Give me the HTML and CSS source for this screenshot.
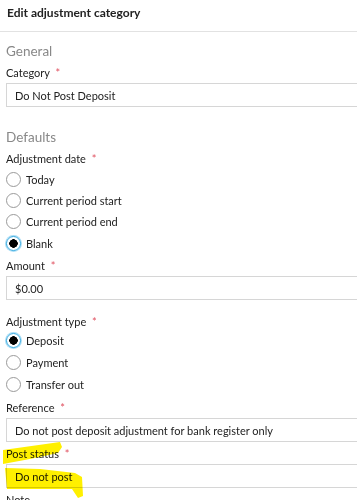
FILE: index.html
```html
<!DOCTYPE html>
<html lang="en">
<head>
    <meta charset="UTF-8">
    <meta name="viewport" content="width=device-width, initial-scale=1.0">
    <title>Edit adjustment category</title>
    <link rel="stylesheet" href="styles.css">
</head>
<body>
    <div class="panel-header">Edit adjustment category</div>

    <div class="panel-body">
        <div class="section-title">General</div>
        <div class="field">
            <label class="field-label">Category <span class="req">*</span></label>
            <div class="text-box">Do Not Post Deposit</div>
        </div>

        <div class="section-title next">Defaults</div>
        <div class="field">
            <label class="field-label">Adjustment date <span class="req">*</span></label>
            <div class="radio-list">
                <div class="radio"><span class="dot"></span>Today</div>
                <div class="radio"><span class="dot"></span>Current period start</div>
                <div class="radio"><span class="dot"></span>Current period end</div>
                <div class="radio checked"><span class="dot"></span>Blank</div>
            </div>
        </div>

        <div class="field">
            <label class="field-label">Amount <span class="req">*</span></label>
            <div class="text-box">$0.00</div>
        </div>

        <div class="field spaced">
            <label class="field-label">Adjustment type <span class="req">*</span></label>
            <div class="radio-list tight">
                <div class="radio checked"><span class="dot"></span>Deposit</div>
                <div class="radio"><span class="dot"></span>Payment</div>
                <div class="radio"><span class="dot"></span>Transfer out</div>
            </div>
        </div>

        <div class="field">
            <label class="field-label">Reference <span class="req">*</span></label>
            <div class="text-box">Do not post deposit adjustment for bank register only</div>
        </div>

        <div class="field marked">
            <!-- marker strokes drawn over the post status field -->
            <svg class="marker" width="100" height="70" viewBox="0 0 100 70">
                <path d="M3 16 L60 8 L62 13 L58 19 L30 25 L3 30 Z" />
                <path d="M5 34 L40 35 L75 39 L82 43 L83 62 L78 64 L72 55 L7 55 Z" />
            </svg>
            <label class="field-label">Post status <span class="req">*</span></label>
            <div class="text-box">Do not post</div>
        </div>

        <div class="field">
            <label class="field-label">Note</label>
        </div>
    </div>
</body>
</html>
```

FILE: styles.css
```css
body {
    margin: 0;
    font-family: "Lato", "Open Sans", sans-serif;
    font-size: 11px;
    color: #222;
    background-color: #fff;
    overflow: hidden;
    width: 357px;
    height: 500px;
}

.panel-header {
    height: 31px;
    line-height: 25px;
    padding-left: 7px;
    font-weight: bold;
    font-size: 12px;
    border-bottom: 1px solid #e2e2e2;
}

.panel-body {
    padding-left: 6px;
    padding-top: 1px;
}

.section-title {
    font-size: 13.5px;
    color: #888;
    margin-top: 8px;
    line-height: 20px;
}

.section-title.next {
    margin-top: 20px;
}

.field {
    margin-top: 2px;
}

.field.spaced {
    margin-top: 12px;
}

.field-label {
    display: block;
    line-height: 20px;
}

.req {
    color: #e05060;
    margin-left: 3px;
}

.text-box {
    width: 380px;
    height: 24px;
    line-height: 23px;
    border: 1px solid #d6d6d6;
    padding-left: 8px;
    box-sizing: border-box;
}

.radio-list {
    display: flex;
    flex-direction: column;
    margin-top: -0.5px;
}

.radio {
    display: flex;
    align-items: center;
    height: 21.3px;
}

.radio-list.tight {
    margin-top: -2px;
}

.radio-list.tight .radio {
    height: 22px;
}

.dot {
    width: 13px;
    height: 13px;
    border: 1px solid #9a9a9a;
    border-radius: 50%;
    margin-right: 5px;
    box-sizing: content-box;
    background: #fff;
}

.radio.checked .dot {
    border: 1px solid #30a8e0;
    background: radial-gradient(circle, #000 0 4px, #fff 4.5px);
    box-shadow: 0 0 0 1px #a8dcf5;
}

.marked {
    position: relative;
}

.marker {
    position: absolute;
    left: -6px;
    top: -10px;
    mix-blend-mode: multiply;
}

.marker path {
    fill: #fff000;
}
```
